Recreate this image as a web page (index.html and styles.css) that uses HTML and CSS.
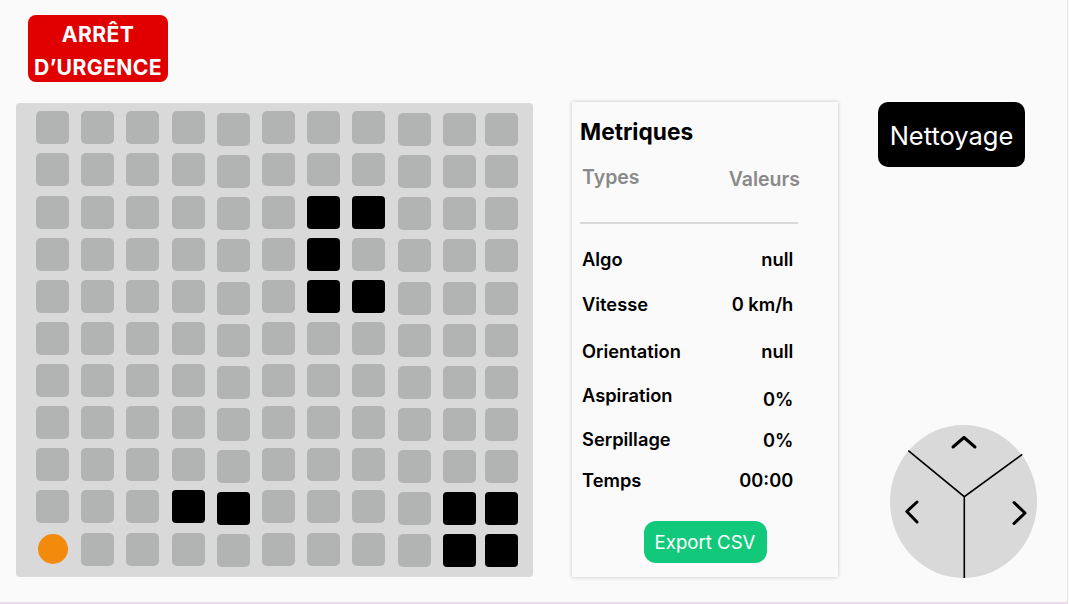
FILE: index.html
```html
<!DOCTYPE html>
<html lang="fr">
<head>
<meta charset="utf-8">
<title>Robot</title>
<link rel="stylesheet" href="styles.css">
</head>
<body>
<div class="frame">
  <header class="header">
    <button class="urgence">ARRÊT<br>D’URGENCE</button>
  </header>
  <main class="main">
    <section class="map">
      <div class="col"><div class="cell"></div><div class="cell"></div><div class="cell"></div><div class="cell"></div><div class="cell"></div><div class="cell"></div><div class="cell"></div><div class="cell"></div><div class="cell"></div><div class="cell"></div><div class="cell robot"><span class="dot"></span></div></div>
      <div class="col"><div class="cell"></div><div class="cell"></div><div class="cell"></div><div class="cell"></div><div class="cell"></div><div class="cell"></div><div class="cell"></div><div class="cell"></div><div class="cell"></div><div class="cell"></div><div class="cell"></div></div>
      <div class="col"><div class="cell"></div><div class="cell"></div><div class="cell"></div><div class="cell"></div><div class="cell"></div><div class="cell"></div><div class="cell"></div><div class="cell"></div><div class="cell"></div><div class="cell"></div><div class="cell"></div></div>
      <div class="col"><div class="cell"></div><div class="cell"></div><div class="cell"></div><div class="cell"></div><div class="cell"></div><div class="cell"></div><div class="cell"></div><div class="cell"></div><div class="cell"></div><div class="cell wall"></div><div class="cell"></div></div>
      <div class="col low"><div class="cell"></div><div class="cell"></div><div class="cell"></div><div class="cell"></div><div class="cell"></div><div class="cell"></div><div class="cell"></div><div class="cell"></div><div class="cell"></div><div class="cell wall"></div><div class="cell"></div></div>
      <div class="col"><div class="cell"></div><div class="cell"></div><div class="cell"></div><div class="cell"></div><div class="cell"></div><div class="cell"></div><div class="cell"></div><div class="cell"></div><div class="cell"></div><div class="cell"></div><div class="cell"></div></div>
      <div class="col"><div class="cell"></div><div class="cell"></div><div class="cell wall"></div><div class="cell wall"></div><div class="cell wall"></div><div class="cell"></div><div class="cell"></div><div class="cell"></div><div class="cell"></div><div class="cell"></div><div class="cell"></div></div>
      <div class="col"><div class="cell"></div><div class="cell"></div><div class="cell wall"></div><div class="cell"></div><div class="cell wall"></div><div class="cell"></div><div class="cell"></div><div class="cell"></div><div class="cell"></div><div class="cell"></div><div class="cell"></div></div>
      <div class="col low"><div class="cell"></div><div class="cell"></div><div class="cell"></div><div class="cell"></div><div class="cell"></div><div class="cell"></div><div class="cell"></div><div class="cell"></div><div class="cell"></div><div class="cell"></div><div class="cell"></div></div>
      <div class="col low"><div class="cell"></div><div class="cell"></div><div class="cell"></div><div class="cell"></div><div class="cell"></div><div class="cell"></div><div class="cell"></div><div class="cell"></div><div class="cell"></div><div class="cell wall"></div><div class="cell wall"></div></div>
      <div class="col low last"><div class="cell"></div><div class="cell"></div><div class="cell"></div><div class="cell"></div><div class="cell"></div><div class="cell"></div><div class="cell"></div><div class="cell"></div><div class="cell"></div><div class="cell wall"></div><div class="cell wall"></div></div>
    </section>

    <section class="card">
      <h2 class="card-title">Metriques</h2>
      <div class="thead">
        <span class="th">Types</span>
        <span class="th th-val">Valeurs</span>
      </div>
      <div class="sep"></div>
      <div class="rows">
        <div class="row"><span class="lbl">Algo</span><span class="val">null</span></div>
        <div class="row"><span class="lbl">Vitesse</span><span class="val">0 km/h</span></div>
        <div class="row"><span class="lbl">Orientation</span><span class="val">null</span></div>
        <div class="row"><span class="lbl">Aspiration</span><span class="val drop4">0%</span></div>
        <div class="row"><span class="lbl">Serpillage</span><span class="val drop1">0%</span></div>
        <div class="row"><span class="lbl">Temps</span><span class="val">00:00</span></div>
      </div>
      <div class="export-wrap"><button class="export">Export CSV</button></div>
    </section>

    <section class="side">
      <button class="nettoyage">Nettoyage</button>
      <div class="pad">
        <svg width="148" height="153" viewBox="0 0 148 153">
          <ellipse cx="73.5" cy="76.5" rx="73.5" ry="76.5" fill="#d9d9d9"/>
          <path d="M18.3 25.7 L74.3 71.7 L132.3 29.3 M74.3 71.7 L74.3 153" fill="none" stroke="#000" stroke-width="1.6"/>
          <polyline points="63,22 74,12.5 85,22" fill="none" stroke="#000" stroke-width="3" stroke-linecap="round" stroke-linejoin="round"/>
          <polyline points="27,77 16.8,86.5 27,97" fill="none" stroke="#000" stroke-width="3" stroke-linecap="round" stroke-linejoin="round"/>
          <polyline points="124,77.5 135,88 124,98.5" fill="none" stroke="#000" stroke-width="3" stroke-linecap="round" stroke-linejoin="round"/>
        </svg>
      </div>
    </section>
  </main>
</div>
</body>
</html>
```

FILE: styles.css
```css
* { box-sizing: border-box; }
html, body { margin: 0; padding: 0; background: #fafafa; }
body { font-family: Inter, "Noto Sans", "Liberation Sans", sans-serif; }

.frame {
  width: 1068px;
  height: 604px;
  border-right: 1px solid #e4e4e4;
  border-bottom: 2px solid #eadcee;
  background: #fafafa;
  overflow: hidden;
}

.header { padding: 15px 0 0 28px; height: 82px; }

.urgence {
  width: 140px;
  height: 67px;
  border: 0;
  border-radius: 8px;
  background: #e10000;
  color: #fff;
  font-family: Inter, "Noto Sans", sans-serif;
  font-weight: 700;
  font-size: 21.2px;
  letter-spacing: 0.35px;
  line-height: 32.6px;
  padding: 3px 0 0 0;
  margin: 0;
  text-align: center;
  white-space: nowrap;
}

.main {
  display: flex;
  align-items: flex-start;
  margin-top: 20px;
  padding-left: 16px;
}

.map {
  width: 517px;
  height: 474px;
  margin-top: 1px;
  background: #d9d9d9;
  border-radius: 4px;
  padding: 8.3px 0 0 20px;
  display: flex;
  gap: 12.2px;
}
.col { display: flex; flex-direction: column; gap: 9.14px; }
.col.low { padding-top: 1.8px; }
.col.last { margin-left: -3.3px; }
.cell {
  width: 33px;
  height: 33px;
  border-radius: 5px;
  background: #b1b4b3;
}
.cell.wall { background: #000; border-radius: 4px; }
.cell.robot {
  background: transparent;
  display: flex;
  align-items: center;
  justify-content: center;
}
.dot {
  width: 30px;
  height: 30px;
  border-radius: 50%;
  background: #f28a0c;
}

.card {
  width: 266px;
  height: 475px;
  margin-left: 39px;
  background: #fafafa;
  box-shadow: 0 0 4px rgba(0, 0, 0, 0.22);
  padding: 16px 44.7px 0 10px;
  display: flex;
  flex-direction: column;
}
.card-title {
  margin: 0 0 0 -2px;
  font-size: 22.7px;
  font-weight: 700;
  line-height: 28px;
  color: #000;
}
.thead {
  display: flex;
  justify-content: space-between;
  margin-top: 19.8px;
  margin-right: -6.7px;
  font-size: 19.5px;
  line-height: 22px;
  font-weight: 600;
  color: #8a8a8a;
}
.th-val { padding-top: 2.2px; }
.sep {
  margin: 31.7px 0 0 -2px;
  width: 218px;
  height: 2px;
  background: #d8d8d8;
}
.rows { display: flex; flex-direction: column; }
.row {
  display: flex;
  justify-content: space-between;
  align-items: flex-start;
  height: 22px;
  font-size: 18.3px;
  line-height: 22px;
  font-weight: 600;
  color: #000;
}
.row:nth-child(1) { margin-top: 24.2px; }
.row:nth-child(2) { margin-top: 23px; }
.row:nth-child(3) { margin-top: 25.3px; }
.row:nth-child(4) { margin-top: 22px; }
.row:nth-child(5) { margin-top: 21.7px; }
.row:nth-child(6) { margin-top: 19.6px; }
.drop4 { padding-top: 3.7px; }
.drop1 { padding-top: 1px; }

.export-wrap { display: flex; justify-content: center; margin: 29.3px 0 0 0; padding-left: 34.7px; }
.export {
  width: 123px;
  height: 42px;
  border: 0;
  border-radius: 12px;
  background: #12c97b;
  color: #fff;
  font-family: Inter, "Noto Sans", sans-serif;
  font-size: 18.6px;
  font-weight: 400;
  padding: 0;
  margin: 0;
}

.side {
  margin-left: 40px;
  height: 476px;
  display: flex;
  flex-direction: column;
  justify-content: space-between;
  align-items: flex-start;
}
.nettoyage {
  width: 147px;
  height: 65px;
  border: 0;
  border-radius: 10px;
  background: #000;
  color: #fff;
  font-family: Inter, "Noto Sans", sans-serif;
  font-size: 25.5px;
  font-weight: 400;
  padding: 2px 0 0 0;
  margin: 0;
}
.pad { margin-left: 12px; height: 153px; }
.pad svg { display: block; }
```
